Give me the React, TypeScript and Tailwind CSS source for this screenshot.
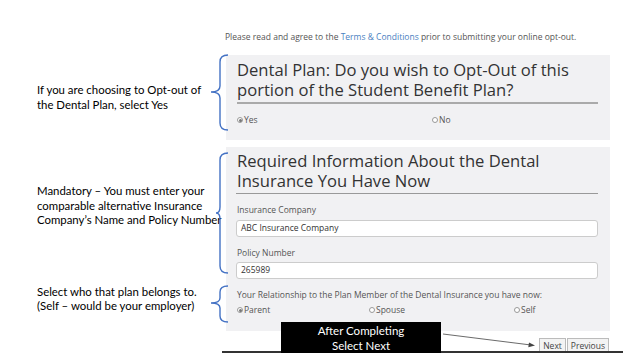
import React from "react";

const formFont = { fontFamily: '"Open Sans", "Noto Sans", sans-serif' };
const noteFont = { fontFamily: 'Lato, "Liberation Sans", sans-serif' };

function Radio({ checked, label, className = "" }: { checked?: boolean; label: string; className?: string }) {
  return (
    <div className={"flex items-center h-[10px] text-[8.5px] leading-[10px] text-[#555] " + className}>
      <span className="w-[6px] h-[6px] rounded-full border border-[#999] bg-white flex items-center justify-center mr-[1px] shrink-0">
        {checked && <span className="w-[3px] h-[3px] rounded-full bg-[#777]" />}
      </span>
      <span>{label}</span>
    </div>
  );
}

export default function App() {
  return (
    <div className="relative w-[640px] h-[360px] bg-white overflow-hidden flex">
      {/* Left annotations */}
      <div className="w-[226px] shrink-0 flex flex-col pl-[37px] pt-[83px] text-[11.4px] leading-[14.5px] text-black" style={noteFont}>
        <p>If you are choosing to Opt-out of<br />the Dental Plan, select Yes</p>
        <p className="mt-[72px] whitespace-nowrap">Mandatory – You must enter your<br />comparable alternative Insurance<br />Company’s Name and Policy Number</p>
        <p className="mt-[57px]">Select who that plan belongs to.<br />(Self – would be your employer)</p>
      </div>

      {/* Form */}
      <div className="w-[384px] shrink-0 flex flex-col pt-[31px]" style={formFont}>
        <p className="text-[8.5px] leading-[12px] text-[#555] whitespace-nowrap -ml-[1px]">
          Please read and agree to the <span className="text-[#4a7fc1]">Terms &amp; Conditions</span> prior to submitting your online opt-out.
        </p>

        <div className="mt-[12px] h-[85px] bg-[#f1f1f3] pl-[11px] pr-[12px] pt-[5px]">
          <h2 className="text-[16.6px] leading-[20px] text-[#333] pb-[2px] border-b-2 border-[#aaa]">
            Dental Plan: Do you wish to Opt-Out of this portion of the Student Benefit Plan?
          </h2>
          <div className="flex mt-[11px]">
            <Radio checked label="Yes" className="w-[195px]" />
            <Radio label="No" />
          </div>
        </div>

        <div className="mt-[7px] h-[184px] bg-[#f1f1f3] pl-[10px] pr-[12px] pt-[4px]">
          <h2 className="text-[16.6px] leading-[20px] text-[#333] pb-[2px] border-b border-[#999] pl-[1px]">
            Required Information About the Dental Insurance You Have Now
          </h2>
          <p className="text-[8.5px] leading-[12px] text-[#555] mt-[10px] pl-[1px]">Insurance Company</p>
          <div className="mt-[4px] h-[17px] bg-white border border-[#ccc] rounded-[3px] px-[4px] flex items-center text-[8.5px] text-[#333]">ABC Insurance Company</div>
          <p className="text-[8.5px] leading-[12px] text-[#555] mt-[10px] pl-[1px]">Policy Number</p>
          <div className="mt-[3px] h-[17px] bg-white border border-[#ccc] rounded-[3px] px-[4px] flex items-center text-[8.5px] text-[#333]">265989</div>
          <p className="text-[8.5px] leading-[12px] text-[#555] mt-[10px] pl-[1px] whitespace-nowrap">Your Relationship to the Plan Member of the Dental Insurance you have now:</p>
          <div className="flex mt-[4px] pl-[1px]">
            <Radio checked label="Parent" className="w-[132px]" />
            <Radio label="Spouse" className="w-[145px]" />
            <Radio label="Self" />
          </div>
        </div>

        <div className="flex justify-end mt-[7px] pr-[1px]">
          <button className="h-[14px] px-[3px] bg-[#f3f3f3] border border-[#bbb] border-b-0 text-[8.5px] leading-[12px] text-[#444]">Next</button>
          <button className="h-[14px] px-[3px] ml-[1px] bg-[#f3f3f3] border border-[#bbb] border-b-0 text-[8.5px] leading-[12px] text-[#444]">Previous</button>
        </div>
        <div className="h-[2px] w-[401px] -ml-[4px] -mt-[1px] bg-[#333]" />
      </div>

      {/* Braces and arrow */}
      <svg className="absolute inset-0 pointer-events-none" width="640" height="360" viewBox="0 0 640 360">
        <g fill="none" stroke="#4472c4" strokeWidth="1.4">
          <path d="M228 55 Q220 55 220 62 L220 86 Q220 92 211 92 Q220 92 220 98 L220 123 Q220 130 228 130" />
          <path d="M228 153 Q220 153 220 160 L220 207 Q220 213 216 213 Q220 213 220 219 L220 266 Q220 273 228 273" />
          <path d="M228 286 Q220 286 220 292 L220 298 Q220 303 211 303 Q220 303 220 308 L220 316 Q220 322 228 322" />
        </g>
        <line x1="443" y1="334" x2="531" y2="345" stroke="#444" strokeWidth="0.8" />
        <path d="M535 345.5 L529 342.6 L528.3 347.2 Z" fill="#444" />
      </svg>

      {/* Callout box */}
      <div className="absolute left-[281px] top-[322px] w-[160px] h-[31px] bg-black text-white text-[11.5px] leading-[15px] flex flex-col items-center justify-center" style={noteFont}>
        <span>After Completing</span>
        <span>Select Next</span>
      </div>
    </div>
  );
}
